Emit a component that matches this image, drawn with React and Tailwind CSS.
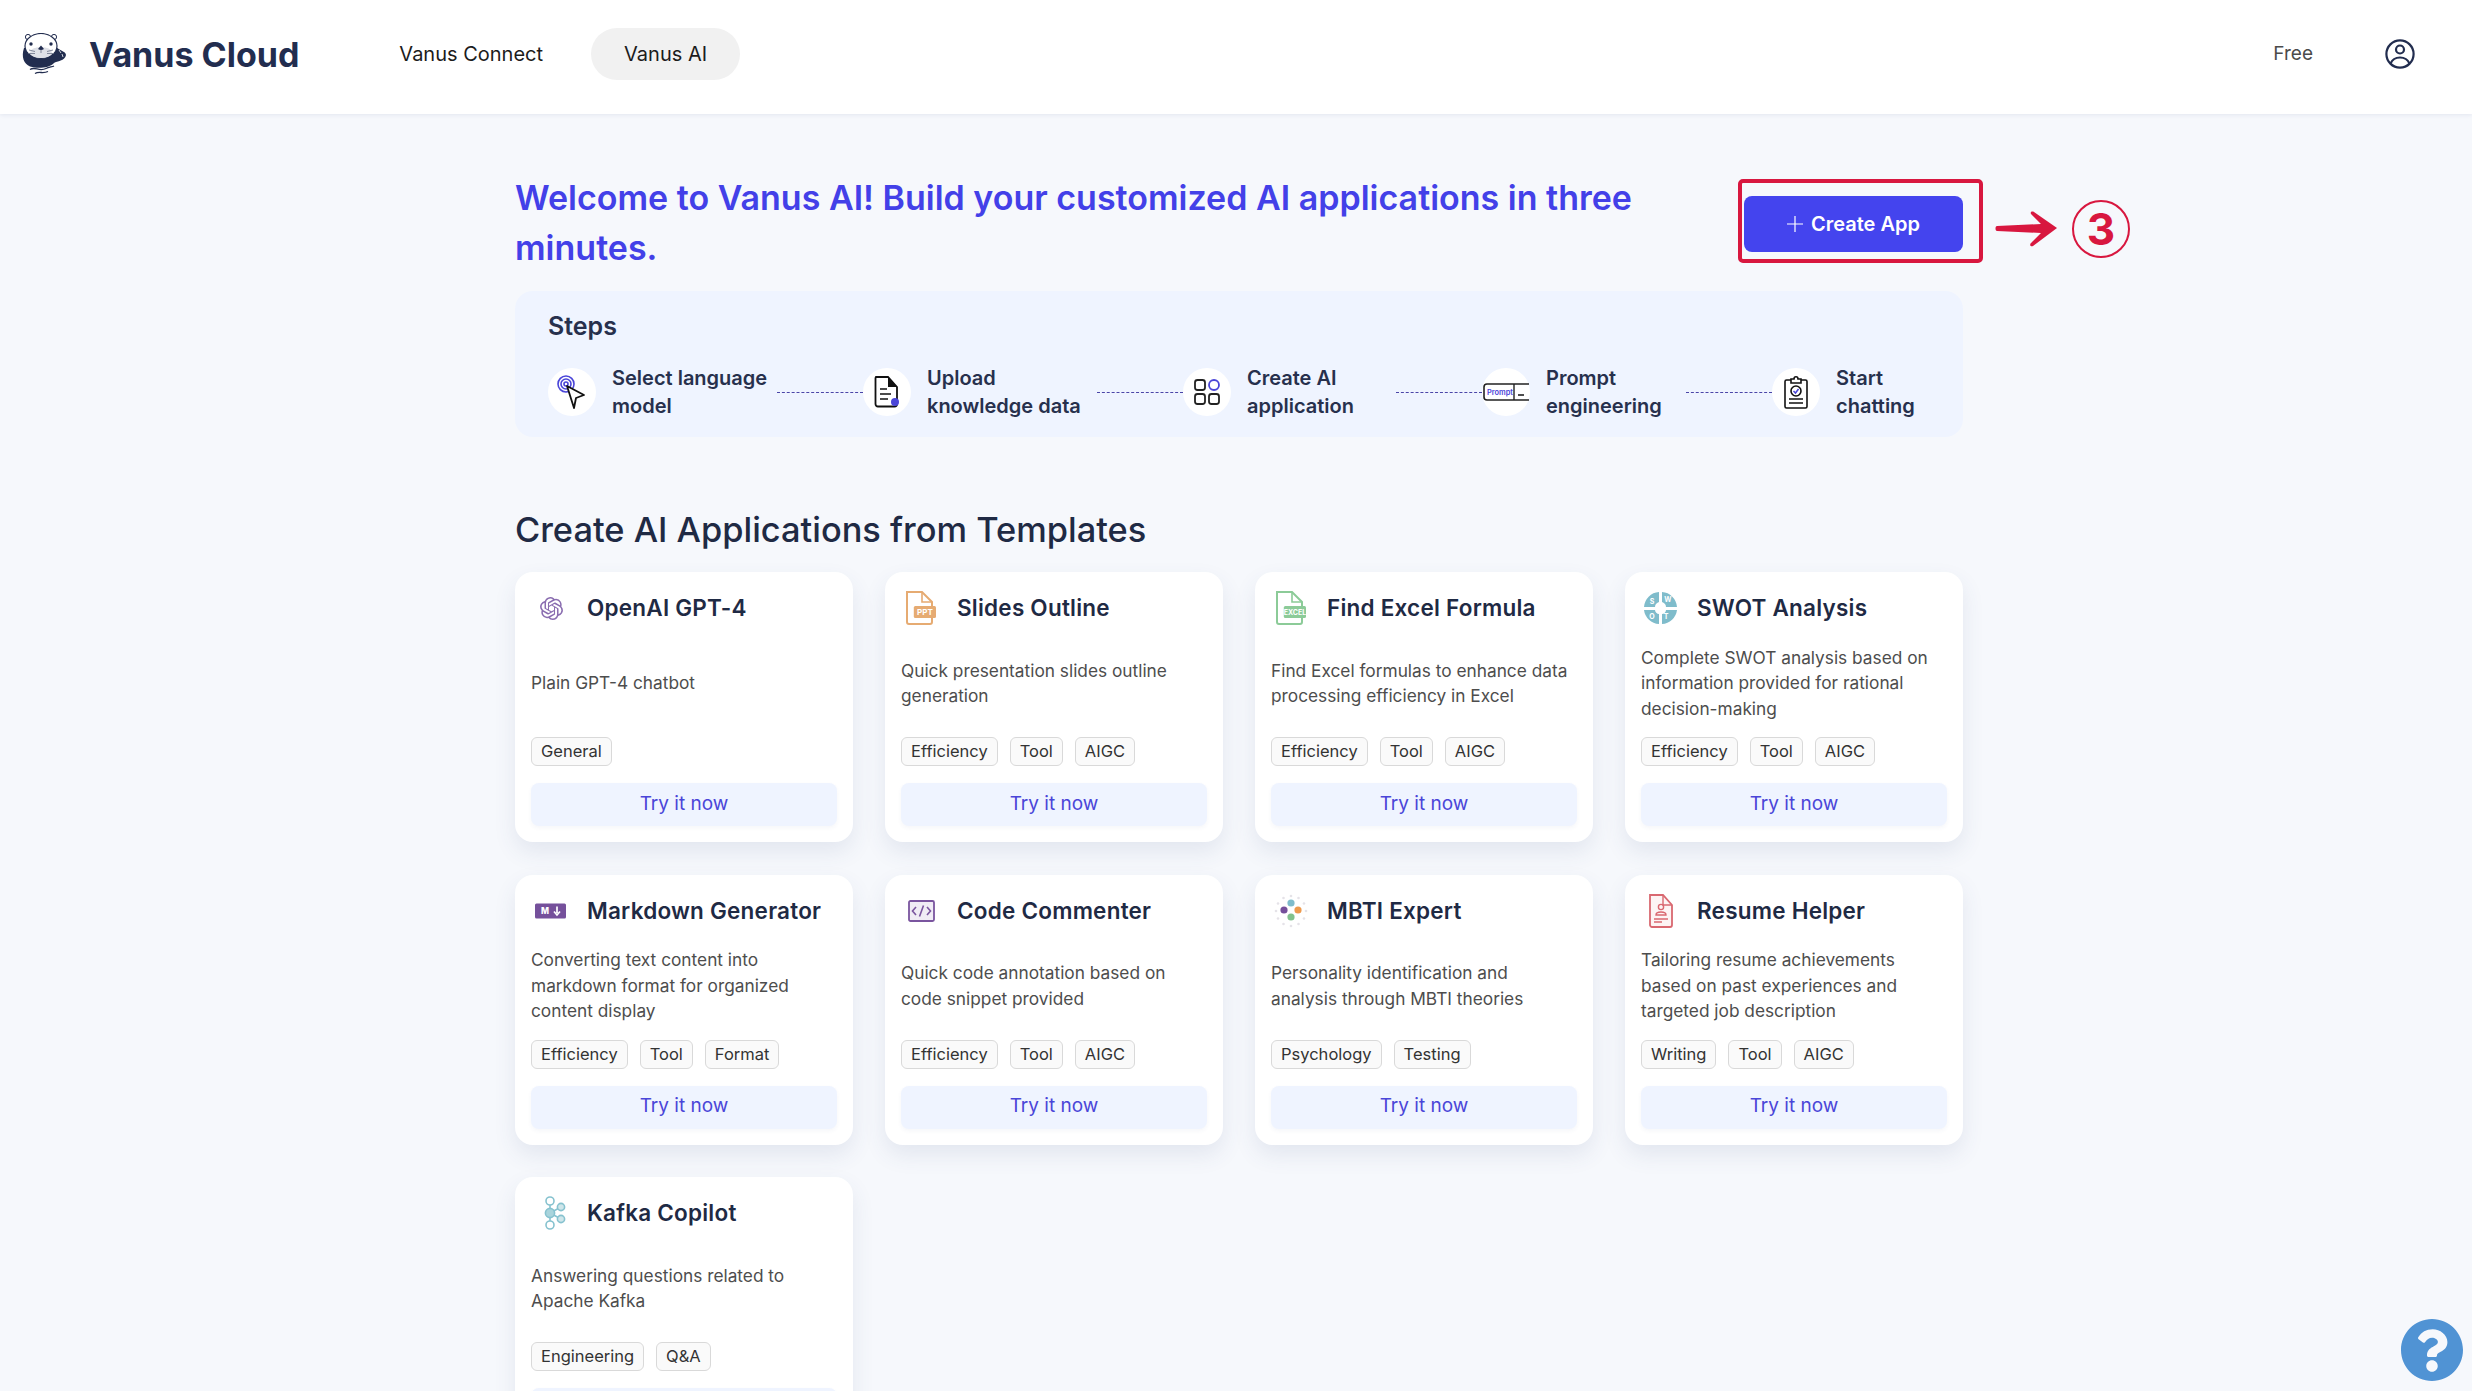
import { FaQuestionCircle } from "react-icons/fa";
import { SiOpenai } from "react-icons/si";

const FONT = "font-['Inter','Liberation_Sans',sans-serif]";

function Logo() {
  return (
    <svg width="46" height="42" viewBox="0 0 46 42">
      <path d="M3 15C0 24 3 31 9 33.5C17 36 28 35 33 30C36 28 44 28 45 22C45 18 38 18 33 12Z" fill="#222d4f" />
      <path d="M38 17L40 20M41 21L42 24" stroke="#fff" strokeWidth="0.8" />
      <circle cx="7" cy="4" r="2.6" fill="#fff" stroke="#222d4f" />
      <circle cx="33" cy="4" r="2.6" fill="#fff" stroke="#222d4f" />
      <ellipse cx="20" cy="13" rx="16" ry="12.5" fill="#fff" stroke="#222d4f" strokeWidth="1.2" />
      <ellipse cx="20" cy="19.5" rx="11" ry="5.6" fill="#dfe1e8" />
      <circle cx="10" cy="11" r="1.7" fill="#222d4f" />
      <circle cx="30" cy="11" r="1.7" fill="#222d4f" />
      <path d="M17 16L20 12.5L23 16Q20 18 17 16Z" fill="#222d4f" />
      <path d="M20 17V20M8 17L14 18.5M7 20.5L14 20.5M32 17L26 18.5M33 20.5L26 20.5" stroke="#6b7288" strokeWidth="0.8" />
      <path d="M9 36.5C14 33 18 39 25 35.5C28 34 31 34 33 33M14 40.5C18 38 22 41 27 38.5" fill="none" stroke="#222d4f" strokeWidth="1.3" />
    </svg>
  );
}

function UserIcon() {
  return (
    <svg width="30" height="30" viewBox="0 0 30 30" fill="none" stroke="#222d4f" strokeWidth="2.2">
      <circle cx="15" cy="15" r="13.6" />
      <circle cx="15" cy="10.5" r="4" />
      <path d="M5.5 24.5C7.5 20 11 18.5 15 18.5C19 18.5 22.5 20 24.5 24.5" />
    </svg>
  );
}

function StepModel() {
  return (
    <svg width="30" height="36" viewBox="0 0 30 36" fill="none">
      <circle cx="9" cy="10" r="8" stroke="#4a45d8" strokeWidth="1.6" />
      <circle cx="9" cy="10" r="5" stroke="#4a45d8" strokeWidth="1.6" />
      <circle cx="9" cy="10" r="2" stroke="#4a45d8" strokeWidth="1.6" />
      <path d="M10 12L27 21L19 24L17 34Z" fill="#fff" stroke="#111" strokeWidth="1.8" strokeLinejoin="round" />
    </svg>
  );
}

function StepUpload() {
  return (
    <svg width="26" height="32" viewBox="0 0 26 32" fill="none">
      <path d="M2 1H14L23 11V28C23 29.5 22 30.5 20.5 30.5H4C2.5 30.5 1.5 29.5 1.5 28V2Z" fill="#fff" stroke="#111" strokeWidth="1.8" />
      <path d="M14 1V11H23Z" fill="#111" />
      <path d="M6 13H13M6 18H17M6 23H14" stroke="#111" strokeWidth="1.6" />
      <circle cx="21" cy="26" r="4" fill="#4a45d8" />
    </svg>
  );
}

function StepApp() {
  return (
    <svg width="28" height="28" viewBox="0 0 28 28" fill="none" strokeWidth="1.8">
      <rect x="2" y="2" width="10" height="10" rx="2.5" stroke="#222" />
      <circle cx="21" cy="7" r="5" stroke="#4a45d8" />
      <rect x="2" y="16" width="10" height="10" rx="2.5" stroke="#222" />
      <rect x="16" y="16" width="10" height="10" rx="2.5" stroke="#222" />
    </svg>
  );
}

function StepPrompt() {
  return (
    <svg width="46" height="18" viewBox="0 0 46 18" fill="none">
      <path d="M46 1H4C2 1 1 2 1 4V14C1 16 2 17 4 17H46" fill="#fff" stroke="#222" strokeWidth="1.6" />
      <path d="M31 1V17" stroke="#222" strokeWidth="1.4" />
      <text x="4" y="12" fontSize="7.4" fontWeight="600" fill="#4a45d8" fontFamily="Inter">Prompt</text>
      <path d="M35 12H41" stroke="#222" strokeWidth="1.6" />
    </svg>
  );
}

function StepChat() {
  return (
    <svg width="26" height="34" viewBox="0 0 26 34" fill="none" stroke="#111" strokeWidth="1.6">
      <rect x="2" y="5" width="22" height="28" rx="1.5" />
      <path d="M8 8V4H11C11 1 15 1 15 4H18V8Z" fill="#fff" />
      <circle cx="13" cy="16" r="5" />
      <path d="M10.5 16L12.5 18L15.5 14" stroke="#4a45d8" strokeWidth="1.5" />
      <path d="M6 24H20M6 28H20" />
    </svg>
  );
}

function FileIcon({ color, label, width = 30 }) {
  return (
    <svg width="32" height="34" viewBox="0 0 32 34" fill="none">
      <path d="M2 1H17L27 11V31C27 32 26 33 25 33H4C3 33 2 32 2 31Z" fill="#fff" stroke={color} strokeWidth="2" />
      <path d="M17 1V11H27" stroke={color} strokeWidth="1.6" />
      <rect x={31 - width * 0.74} y="15" width={width * 0.74} height="12" rx="1.5" fill={color} />
      <text x={31 - width * 0.37} y="24.4" textAnchor="middle" fontSize={label.length > 3 ? 7 : 8} fontWeight="700" fill="#fff" fontFamily="Inter">{label}</text>
    </svg>
  );
}

function SwotIcon() {
  return (
    <svg width="36" height="34" viewBox="0 0 36 34">
      <path d="M16 1A16 16 0 0 0 1 16H12C12 13 14 12 16 11Z" fill="#7fbccb" />
      <path d="M19 1A16 16 0 0 1 34 16H23C23 13 21 12 19 11Z" fill="#7fbccb" />
      <path d="M1 19A16 16 0 0 0 16 33V23C14 23 12 21 12 19Z" fill="#7fbccb" />
      <path d="M34 19A16 16 0 0 1 19 33V23C21 23 23 21 23 19Z" fill="#7fbccb" />
      <text x="9" y="13" fontSize="7" fontWeight="700" fill="#fff" textAnchor="middle" fontFamily="Inter">S</text>
      <text x="25" y="11" fontSize="7" fontWeight="700" fill="#fff" textAnchor="middle" fontFamily="Inter">W</text>
      <text x="9" y="28" fontSize="7" fontWeight="700" fill="#fff" textAnchor="middle" fontFamily="Inter">O</text>
      <text x="23" y="28" fontSize="7" fontWeight="700" fill="#fff" textAnchor="middle" fontFamily="Inter">T</text>
    </svg>
  );
}

function MarkdownIcon() {
  return (
    <svg width="32" height="16" viewBox="0 0 32 16">
      <rect width="31" height="15" y="0.5" rx="1.5" fill="#75509b" />
      <text x="10" y="11.4" fontSize="8.5" fontWeight="800" fill="#fff" textAnchor="middle" fontFamily="Inter">M</text>
      <path d="M22 3.5V10M19 8.5L22 12L25 8.5" stroke="#fff" strokeWidth="1.7" fill="none" />
    </svg>
  );
}

function CodeIcon() {
  return (
    <svg width="27" height="22" viewBox="0 0 27 22" fill="none" stroke="#7a559f">
      <rect x="1" y="1" width="25" height="20" rx="1.5" fill="#f0ecf5" strokeWidth="1.8" />
      <path d="M8 7L4.5 11L8 15M19 7L22.5 11L19 15M15.5 5.5L11.5 16.5" strokeWidth="1.6" />
    </svg>
  );
}

function MbtiIcon() {
  const ring = [0, 30, 60, 90, 120, 150, 180, 210, 240, 270, 300, 330];
  return (
    <svg width="34" height="34" viewBox="0 0 34 34">
      {ring.map((a) => (
        <circle
          key={a}
          cx={17 + 15 * Math.cos((a * Math.PI) / 180)}
          cy={17 + 15 * Math.sin((a * Math.PI) / 180)}
          r="1.3"
          fill="#e5e3e8"
        />
      ))}
      <circle cx="17" cy="9" r="3.6" fill="#7fbccb" />
      <circle cx="10" cy="16" r="3.6" fill="#75509b" />
      <circle cx="24" cy="16" r="3.6" fill="#ee9a4d" />
      <circle cx="17" cy="23" r="3.6" fill="#82c28d" />
    </svg>
  );
}

function ResumeIcon() {
  return (
    <svg width="26" height="34" viewBox="0 0 26 34" fill="none" stroke="#d96870">
      <path d="M2 1H15L24 11V31C24 32 23 33 22 33H4C3 33 2 32 2 31Z" fill="#fdf4f4" strokeWidth="1.8" />
      <path d="M15 1V11H24" strokeWidth="1.4" />
      <circle cx="13" cy="13" r="2.6" strokeWidth="1.4" />
      <path d="M8 21C8 17 18 17 18 21Z" strokeWidth="1.4" />
      <path d="M6 25H20M6 28H14" strokeWidth="1.4" />
    </svg>
  );
}

function KafkaIcon() {
  return (
    <svg className="ml-2" width="24" height="34" viewBox="0 0 24 34" fill="#cfe6ea" stroke="#86c2cf" strokeWidth="1.6">
      <path d="M7 5V29M7 17L18 11M7 17L18 23" fill="none" />
      <circle cx="7" cy="5" r="4" fill="#fff" />
      <circle cx="18" cy="11" r="3.6" />
      <circle cx="7" cy="17" r="4.6" fill="#a9d4dc" />
      <circle cx="18" cy="23" r="3.6" />
      <circle cx="7" cy="29" r="4" fill="#fff" />
    </svg>
  );
}

const steps = [
  { icon: <StepModel />, lines: ["Select language", "model"], textClass: "w-[165px]", line: true },
  { icon: <StepUpload />, lines: ["Upload", "knowledge data"], textClass: "w-[170px]", line: true },
  { icon: <StepApp />, lines: ["Create AI", "application"], textClass: "w-[149px]", line: true },
  { icon: <StepPrompt />, lines: ["Prompt", "engineering"], textClass: "w-[140px]", line: true },
  { icon: <StepChat />, lines: ["Start", "chatting"], textClass: "w-[100px]", line: false },
];

const templates = [
  { title: "OpenAI GPT-4", icon: <SiOpenai size={23} color="#8a6db0" />, desc: "Plain GPT-4 chatbot", tags: ["General"] },
  { title: "Slides Outline", icon: <FileIcon color="#e6ab72" label="PPT" />, desc: "Quick presentation slides outline generation", tags: ["Efficiency", "Tool", "AIGC"] },
  { title: "Find Excel Formula", icon: <FileIcon color="#8ccb98" label="EXCEL" />, desc: "Find Excel formulas to enhance data processing efficiency in Excel", tags: ["Efficiency", "Tool", "AIGC"] },
  { title: "SWOT Analysis", icon: <SwotIcon />, desc: "Complete SWOT analysis based on information provided for rational decision-making", tags: ["Efficiency", "Tool", "AIGC"] },
  { title: "Markdown Generator", icon: <MarkdownIcon />, desc: "Converting text content into markdown format for organized content display", tags: ["Efficiency", "Tool", "Format"] },
  { title: "Code Commenter", icon: <CodeIcon />, desc: "Quick code annotation based on code snippet provided", tags: ["Efficiency", "Tool", "AIGC"] },
  { title: "MBTI Expert", icon: <MbtiIcon />, desc: "Personality identification and analysis through MBTI theories", tags: ["Psychology", "Testing"] },
  { title: "Resume Helper", icon: <ResumeIcon />, desc: "Tailoring resume achievements based on past experiences and targeted job description", tags: ["Writing", "Tool", "AIGC"] },
  { title: "Kafka Copilot", icon: <KafkaIcon />, desc: "Answering questions related to Apache Kafka", tags: ["Engineering", "Q&A"] },
];

function TemplateCard({ item }) {
  return (
    <div className="flex h-[270px] flex-col rounded-[18px] bg-white px-4 pt-4 pb-4 shadow-[0_10px_22px_rgba(60,80,130,0.10)]">
      <div className="flex h-10 items-center gap-4">
        <div className="flex w-10 shrink-0 items-center justify-center">{item.icon}</div>
        <div className="whitespace-nowrap text-[22.5px] font-semibold tracking-[0.01em] text-[#1f2a44]">{item.title}</div>
      </div>
      <div className="mt-[10px] flex h-[90px] items-center text-[17.3px] leading-[25.5px] text-[#4d4d4d]">
        <p>{item.desc}</p>
      </div>
      <div className="mt-[9px] flex gap-3">
        {item.tags.map((tag) => (
          <span key={tag} className="flex h-[29px] items-center rounded-md border border-[#d9d9d9] bg-[#fafafa] px-[9px] text-[16.5px] text-[#333]">
            {tag}
          </span>
        ))}
      </div>
      <button className="mt-[17px] h-[43px] w-full shrink-0 rounded-lg bg-[#eff4ff] pb-[1px] text-[19px] text-[#4a45d8] shadow-[0_2px_4px_rgba(60,80,130,0.05)]">
        Try it now
      </button>
    </div>
  );
}

export default function App() {
  return (
    <div className={`relative h-screen overflow-hidden bg-[#f6f8fc] ${FONT}`}>
      <header className="flex h-[114px] items-center bg-white pb-[6px] shadow-[0_1px_4px_rgba(60,80,130,0.10)]">
        <div className="ml-[21px]">
          <Logo />
        </div>
        <div className="ml-[22px] text-[34px] font-bold text-[#222d4f]">Vanus Cloud</div>
        <nav className="ml-[100px] flex items-center gap-[48px] text-[20px] text-[#1c1c1c]">
          <span>Vanus Connect</span>
          <span className="flex h-[52px] items-center rounded-full bg-[#f1f1f1] px-[33px]">Vanus AI</span>
        </nav>
        <span className="ml-auto text-[19px] text-[#4b4b4b]">Free</span>
        <div className="ml-[72px] mr-[57px]">
          <UserIcon />
        </div>
      </header>

      <main className="ml-[515px] w-[1448px] pt-[59px]">
        <div className="flex items-start justify-between">
          <h1 className="w-[1150px] text-[34px] font-semibold leading-[50px] text-[#4340e8]">
            Welcome to Vanus AI! Build your customized AI applications in three minutes.
          </h1>
          <button className="relative mt-[23px] flex h-14 w-[219px] items-center justify-center gap-2 rounded-lg bg-[#4444ee] text-[20px] font-semibold text-white">
            <svg width="16" height="16" viewBox="0 0 16 16" stroke="#fff" strokeWidth="1.2">
              <path d="M8 0V16M0 8H16" />
            </svg>
            Create App
            <span className="absolute -top-[17px] -left-[6px] h-[84px] w-[245px] rounded-[5px] border-4 border-[#d8173f]" />
            <svg className="absolute top-[15px] left-[251px]" width="64" height="36" viewBox="0 0 64 36" fill="#d8173f">
              <path d="M2 15L46 13L36 3C35 1 37 0 39 1L62 17L38 35C36 36 34 34 36 32L46 22L2 20C0 20 0 15 2 15Z" />
            </svg>
            <span className="absolute top-[4px] left-[328px] flex h-[58px] w-[58px] items-center justify-center rounded-full border-2 border-[#d8173f] text-[44px] font-bold leading-none text-[#d8173f]">
              3
            </span>
          </button>
        </div>

        <section className="mt-[18px] h-[146px] rounded-[18px] bg-[#eff4ff] pl-[33px] pt-[18px]">
          <h2 className="text-[25px] font-semibold leading-[34px] text-[#27304d]">Steps</h2>
          <div className="mt-[21px] flex items-center">
            {steps.map((step) => (
              <div key={step.lines[0]} className="flex items-center">
                <div className="flex h-12 w-12 shrink-0 items-center justify-center rounded-full bg-white">{step.icon}</div>
                <div className={`ml-4 whitespace-nowrap text-[20px] font-semibold leading-[28px] text-[#27304d] ${step.textClass}`}>
                  <div>{step.lines[0]}</div>
                  <div>{step.lines[1]}</div>
                </div>
                {step.line && <div className="w-[86px] border-t border-dashed border-[#4a45a8]" />}
              </div>
            ))}
          </div>
        </section>

        <h2 className="mt-[68px] text-[34.4px] font-medium leading-[50px] text-[#1f2a44]">Create AI Applications from Templates</h2>

        <div className="mt-[17px] grid grid-cols-4 gap-x-8 gap-y-[32.5px]">
          {templates.map((item) => (
            <TemplateCard key={item.title} item={item} />
          ))}
        </div>
      </main>

      <FaQuestionCircle className="absolute right-[8px] bottom-[9px] rounded-full" size={64} color="#5093d4" />
    </div>
  );
}
